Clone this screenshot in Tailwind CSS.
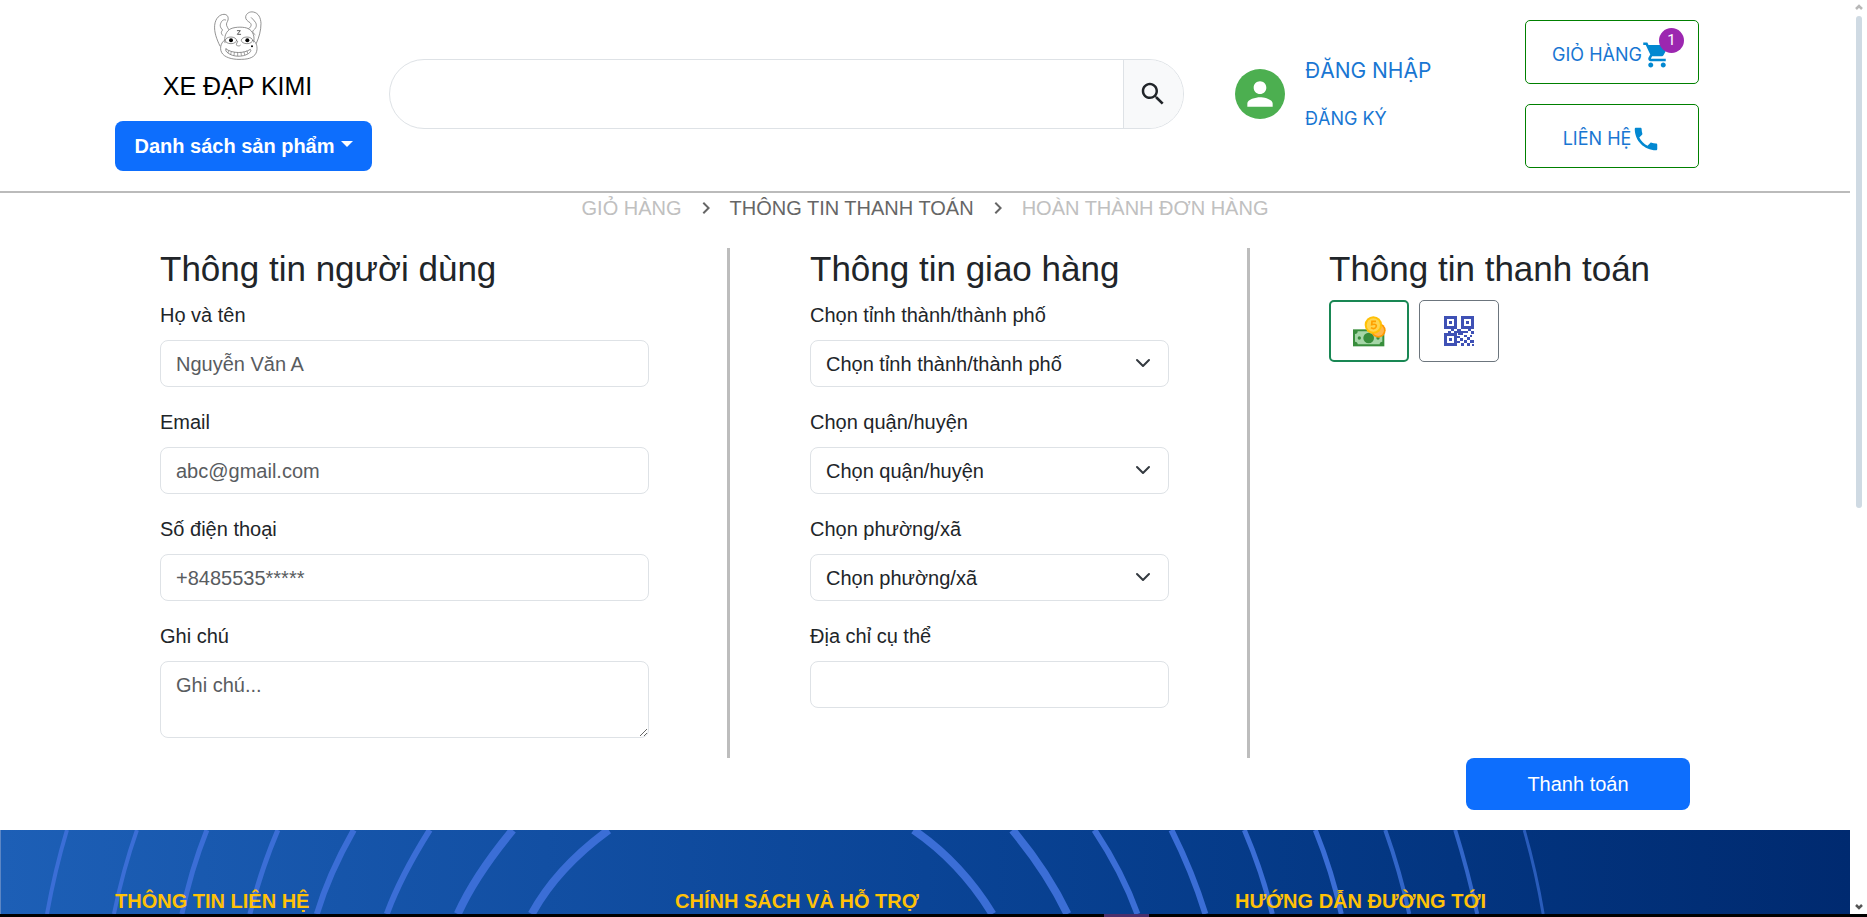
<!DOCTYPE html>
<html lang="vi">
<head>
<meta charset="utf-8">
<meta name="viewport" content="width=device-width, initial-scale=1">
<title>Xe Đạp Kimi - Thông tin thanh toán</title>
<script src="https://cdn.jsdelivr.net/npm/@tailwindcss/browser@4"></script>
</head>
<body class="flex h-screen overflow-hidden bg-white font-['Liberation_Sans',Arial,sans-serif] text-[20px] leading-[30px] text-[#212529]">
<div class="flex min-w-0 flex-1 flex-col">

  <header class="flex items-center border-b-2 border-[#bbbbbb] pr-[151px] pb-1 pl-[115px]">
    <div class="w-[257px] shrink-0 pt-[10px] pb-4">
      <a href="#" class="flex flex-col items-center pr-3 text-[25px] leading-[36px] text-black">
        <svg class="mb-2 size-[50px]" viewBox="39 30 150 150" fill="none" stroke="#777" stroke-width="2.4" stroke-linecap="round" aria-hidden="true">
          <path d="M60 138C50 118 42 96 44 76 46 54 60 43 72 43c10 0 14 8 12 17-2 8-6 8-4 17 1 5 5 7 6 11"/>
          <path d="M68 106c-6-7-5-10 0-16-8-8-9-14-5-22 3-7 9-11 14-8"/>
          <path d="M75 128c-4-18 4-36 18-42 14-6 40-6 52 0 14 7 20 24 16 40"/>
          <path d="M146 86c8-6 10-12 4-18-8-5-14-10-13-18 2-10 12-16 23-14 16 3 22 18 23 34 0 22-6 42-14 60"/>
          <path d="M165 104c-8-6-8-10-4-14 8-6 10-14 6-22-4-6-8-10-13-15"/>
          <path d="M74 120c-14 10-16 30-6 42 12 14 38 17 56 16 26 0 42-8 46-24 3-12 0-26-9-32"/>
          <path d="M78 147c20 14 54 14 73 1 4 3 0 9-6 13-18 11-46 10-61-2-6-4-9-9-6-12z"/>
          <path d="M86 152l-2 6M94 155l-2 8M103 157l-1 9M113 158v9M123 157l1 9M132 156l2 8M141 153l2 7" stroke-width="2"/>
          <ellipse cx="93" cy="121" rx="17" ry="10"/><ellipse cx="141" cy="121" rx="17" ry="10"/>
          <path d="M113 124c-4 8-6 12-1 13 4 1 6 2 9-1"/>
          <circle cx="93" cy="121" r="6" fill="#000" stroke="none"/><circle cx="142" cy="121" r="6" fill="#000" stroke="none"/>
          <circle cx="156" cy="139" r="3" fill="#000" stroke="none"/>
          <path d="M112 92h9l-9 11h10" stroke="#333"/>
        </svg>
        XE ĐẠP KIMI
      </a>
      <button type="button" class="mt-[17px] flex h-[50px] w-full items-center justify-center gap-[6px] rounded-lg bg-[#0d6efd] font-bold text-white">
        Danh sách sản phẩm
        <svg class="mb-1 h-[6px] w-3" viewBox="0 0 12 6" fill="currentColor" aria-hidden="true"><path d="M0 0h12L6 6z"/></svg>
      </button>
    </div>

    <form class="ml-[17px] flex h-[70px] min-w-0 flex-1 overflow-hidden rounded-full border border-[#dee2e6]">
      <input type="search" aria-label="Tìm kiếm" class="min-w-0 flex-1 px-8 outline-none">
      <button type="button" aria-label="Tìm" class="flex w-[60px] items-center border-l border-[#dee2e6] bg-[#f8f9fa] pl-[14px]">
        <svg class="size-[30px]" viewBox="0 0 24 24" fill="#212529" aria-hidden="true"><path d="M15.5 14h-.79l-.28-.27C15.41 12.59 16 11.11 16 9.5 16 5.91 13.09 3 9.5 3S3 5.91 3 9.5 5.91 16 9.5 16c1.61 0 3.09-.59 4.23-1.57l.27.28v.79l5 4.99L20.49 19l-4.99-5zm-6 0C7.01 14 5 11.99 5 9.5S7.01 5 9.5 5 14 7.01 14 9.5 11.99 14 9.5 14z"/></svg>
      </button>
    </form>

    <span class="ml-[51px] flex size-[50px] shrink-0 items-center justify-center rounded-full bg-[#4caf50]">
      <svg class="size-[38px]" viewBox="0 0 24 24" fill="#fff" aria-hidden="true"><path d="M12 12c2.21 0 4-1.79 4-4s-1.79-4-4-4-4 1.79-4 4 1.79 4 4 4zm0 2c-2.67 0-8 1.34-8 4v2h16v-2c0-2.66-5.33-4-8-4z"/></svg>
    </span>
    <nav class="ml-5 flex w-[220px] shrink-0 flex-col gap-5 font-[Inter,sans-serif] text-[#1976d2]">
      <a href="#" class="text-[21px] leading-[30px]">ĐĂNG NHẬP</a>
      <a href="#" class="text-[18px] leading-[26px]">ĐĂNG KÝ</a>
    </nav>
    <div class="flex w-[174px] shrink-0 flex-col gap-5 font-[Inter,sans-serif] text-[18px] leading-[26px] text-[#1976d2]">
      <button type="button" class="flex h-16 items-center justify-center rounded-[5px] border border-[#008000] pt-[6px]">
        GIỎ HÀNG
        <span class="relative">
          <svg class="size-[30px]" viewBox="0 0 24 24" fill="#0288d1" aria-hidden="true"><path d="M7 18c-1.1 0-1.99.9-1.99 2S5.9 22 7 22s2-.9 2-2-.9-2-2-2zM1 2v2h2l3.6 7.59-1.35 2.45c-.16.28-.25.61-.25.96 0 1.1.9 2 2 2h12v-2H7.42c-.14 0-.25-.11-.25-.25l.03-.12.9-1.63h7.45c.75 0 1.41-.41 1.75-1.03l3.58-6.49c.08-.14.12-.31.12-.48 0-.55-.45-1-1-1H5.21l-.94-2H1zm16 16c-1.1 0-1.99.9-1.99 2s.89 2 1.99 2 2-.9 2-2-.9-2-2-2z"/></svg>
          <span class="absolute -top-3 -right-3 flex size-[25px] items-center justify-center rounded-full bg-[#9c27b0] font-[Roboto,sans-serif] text-[15px] text-white">1</span>
        </span>
      </button>
      <button type="button" class="flex h-16 items-center justify-center rounded-[5px] border border-[#008000] pt-[6px]">
        LIÊN HỆ
        <svg class="size-[30px]" viewBox="0 0 24 24" fill="#0288d1" aria-hidden="true"><path d="M6.62 10.79c1.44 2.83 3.76 5.14 6.59 6.59l2.2-2.2c.27-.27.67-.36 1.02-.24 1.12.37 2.33.57 3.57.57.55 0 1 .45 1 1V20c0 .55-.45 1-1 1-9.39 0-17-7.61-17-17 0-.55.45-1 1-1h3.5c.55 0 1 .45 1 1 0 1.25.2 2.45.57 3.57.11.35.03.74-.25 1.02l-2.2 2.2z"/></svg>
      </button>
    </div>
  </header>

  <nav aria-label="Tiến trình" class="flex items-center justify-center gap-3">
    <a href="#" class="text-[#c0c0c0]">GIỎ HÀNG</a>
    <svg class="size-6" viewBox="0 0 24 24" fill="#666" aria-hidden="true"><path d="M10 6 8.59 7.41 13.17 12l-4.58 4.59L10 18l6-6z"/></svg>
    <a href="#" aria-current="step" class="text-[#666666]">THÔNG TIN THANH TOÁN</a>
    <svg class="size-6" viewBox="0 0 24 24" fill="#666" aria-hidden="true"><path d="M10 6 8.59 7.41 13.17 12l-4.58 4.59L10 18l6-6z"/></svg>
    <a href="#" class="text-[#c0c0c0]">HOÀN THÀNH ĐƠN HÀNG</a>
  </nav>

  <main class="mt-[25px] px-20 pb-5">
    <form>
      <div class="grid grid-cols-[5fr_4fr_4fr]">
        <section class="border-r-3 border-[#bdbdbd] pr-[78px] pb-5 pl-20">
          <h2 class="mb-[10px] text-[35px] leading-[42px]">Thông tin người dùng</h2>
          <div class="flex flex-col gap-5">
            <div class="flex flex-col gap-[10px]">
              <label for="name">Họ và tên</label>
              <input id="name" type="text" placeholder="Nguyễn Văn A" class="h-[47px] rounded-lg border border-[#dee2e6] px-[15px] pt-[2px] placeholder:text-[#595c5f]">
            </div>
            <div class="flex flex-col gap-[10px]">
              <label for="email">Email</label>
              <input id="email" type="email" placeholder="abc@gmail.com" class="h-[47px] rounded-lg border border-[#dee2e6] px-[15px] pt-[2px] placeholder:text-[#595c5f]">
            </div>
            <div class="flex flex-col gap-[10px]">
              <label for="phone">Số điện thoại</label>
              <input id="phone" type="tel" placeholder="+8485535*****" class="h-[47px] rounded-lg border border-[#dee2e6] px-[15px] pt-[2px] placeholder:text-[#595c5f]">
            </div>
            <div class="flex flex-col gap-[10px]">
              <label for="note">Ghi chú</label>
              <textarea id="note" placeholder="Ghi chú..." class="h-[77px] resize-y rounded-lg border border-[#dee2e6] px-[15px] py-2 placeholder:text-[#595c5f]"></textarea>
            </div>
          </div>
        </section>

        <section class="border-r-3 border-[#bdbdbd] pr-[78px] pb-5 pl-20">
          <h2 class="mb-[10px] text-[35px] leading-[42px]">Thông tin giao hàng</h2>
          <div class="flex flex-col gap-5">
            <div class="flex flex-col gap-[10px]">
              <label for="city">Chọn tỉnh thành/thành phố</label>
              <div class="relative">
                <select id="city" class="block h-[47px] w-full appearance-none rounded-lg border border-[#dee2e6] px-[15px]"><option>Chọn tỉnh thành/thành phố</option></select>
                <svg class="pointer-events-none absolute top-[15px] right-[18px] size-4" viewBox="0 0 16 16" fill="none" stroke="#343a40" stroke-width="2" stroke-linecap="round" stroke-linejoin="round" aria-hidden="true"><path d="m2 5 6 6 6-6"/></svg>
              </div>
            </div>
            <div class="flex flex-col gap-[10px]">
              <label for="district">Chọn quận/huyện</label>
              <div class="relative">
                <select id="district" class="block h-[47px] w-full appearance-none rounded-lg border border-[#dee2e6] px-[15px]"><option>Chọn quận/huyện</option></select>
                <svg class="pointer-events-none absolute top-[15px] right-[18px] size-4" viewBox="0 0 16 16" fill="none" stroke="#343a40" stroke-width="2" stroke-linecap="round" stroke-linejoin="round" aria-hidden="true"><path d="m2 5 6 6 6-6"/></svg>
              </div>
            </div>
            <div class="flex flex-col gap-[10px]">
              <label for="ward">Chọn phường/xã</label>
              <div class="relative">
                <select id="ward" class="block h-[47px] w-full appearance-none rounded-lg border border-[#dee2e6] px-[15px]"><option>Chọn phường/xã</option></select>
                <svg class="pointer-events-none absolute top-[15px] right-[18px] size-4" viewBox="0 0 16 16" fill="none" stroke="#343a40" stroke-width="2" stroke-linecap="round" stroke-linejoin="round" aria-hidden="true"><path d="m2 5 6 6 6-6"/></svg>
              </div>
            </div>
            <div class="flex flex-col gap-[10px]">
              <label for="address">Địa chỉ cụ thể</label>
              <input id="address" type="text" class="h-[47px] rounded-lg border border-[#dee2e6] px-[15px]">
            </div>
          </div>
        </section>

        <section class="pl-[79px]">
          <h2 class="mb-[10px] text-[35px] leading-[42px] whitespace-nowrap">Thông tin thanh toán</h2>
          <div class="flex gap-[10px]">
            <button type="button" aria-label="Tiền mặt" class="flex h-[62px] w-20 items-center justify-center rounded-[5px] border-2 border-[#198754]">
              <svg class="h-[31px] w-[33px]" viewBox="0 0 99 93" aria-hidden="true">
                <path fill="#388e3c" d="M0 40h94v51H0z"/>
                <path fill="#a5d6a7" d="M14 46h66a8 8 0 0 0 8 8v23a8 8 0 0 0-8 8H14a8 8 0 0 0-8-8V54a8 8 0 0 0 8-8z"/>
                <circle cx="47" cy="66" r="16" fill="#388e3c"/><circle cx="19" cy="66" r="5" fill="#388e3c"/><circle cx="75" cy="66" r="5" fill="#388e3c"/>
                <circle cx="76" cy="43" r="22" fill="#ff9800"/><circle cx="76" cy="43" r="17" fill="#ffb74d"/>
                <circle cx="61" cy="27" r="26" fill="#ffc107"/><circle cx="61" cy="27" r="20" fill="#ffd54f"/>
                <path fill="none" stroke="#ff9f00" stroke-width="5" d="M69 16H57l-1 10c12-4 16 2 13 7-3 6-10 6-15 2"/>
              </svg>
            </button>
            <button type="button" aria-label="Mã QR" class="flex h-[62px] w-20 items-center justify-center rounded-[5px] border border-[#6c757d]">
              <svg class="size-[30px]" viewBox="0 0 30 30" fill="#3f51b5" aria-hidden="true">
                <path fill-rule="evenodd" d="M0 0h13v13H0zM3 3v7h7V3zM17 0h13v13H17zM20 3v7h7V3zM0 17h13v13H0zM3 20v7h7v-7z"/>
                <path d="M5 5h3v3H5zM22 5h3v3h-3zM5 22h3v3H5zM13 13h4v4h-4zM7 13h3v2H7zM4 15h3v2H4zM10 15h3v2h-3zM17 15h7v2h-7zM24 13h3v2h-3zM27 15h3v3h-3zM14 17h5v2h-5zM13 20h3v2h-3zM16 22h3v3h-3zM13 25h3v2h-3zM20 19h3v2h-3zM23 21h3v3h-3zM26 19h2v2h-2zM20 24h3v3h-3zM26 24h4v3h-4zM23 27h3v3h-3zM17 27h3v3h-3zM28 28h2v2h-2z"/>
              </svg>
            </button>
          </div>
        </section>
      </div>
      <div class="flex justify-end pr-20">
        <button type="button" class="h-[52px] w-56 rounded-lg bg-[#0d6efd] text-white">Thanh toán</button>
      </div>
    </form>
  </main>

  <footer class="relative flex-1 overflow-hidden border-l border-[#5c86c4] bg-linear-to-r from-[#1d5fb6] via-[#0a4496] to-[#002a70]">
    <svg class="absolute inset-0 size-full" viewBox="0 0 1850 84" preserveAspectRatio="none" fill="none" stroke="#3b6ed6" aria-hidden="true">
      <g stroke-width="4"><path d="M66 0Q54 40 46 84"/><path d="M136 0Q122 40 113 84"/></g>
      <path stroke-width="5" d="M206 0Q190 40 181 84M277 0Q260 40 249 84"/>
      <path stroke-width="6" d="M353 0Q328 44 316 84M429 0Q400 46 386 84"/>
      <path stroke-width="8" d="M512 0Q474 46 457 84M608 0Q556 38 531 84"/>
      <path stroke-width="8" d="M913 0Q960 32 992 84M1012 0Q1047 42 1067 84"/>
      <path stroke-width="6" d="M1094 0Q1122 42 1137 84M1171 0Q1192 42 1205 84"/>
      <path stroke-width="5" d="M1244 0Q1262 42 1272 84M1315 0Q1332 42 1341 84"/>
      <path stroke-width="4" opacity=".85" d="M1385 0Q1400 42 1409 84M1455 0Q1468 42 1477 84"/>
      <path stroke-width="3" opacity=".7" d="M1524 0Q1536 42 1543 84"/>
    </svg>
    <div class="relative grid grid-cols-3 pt-14 pr-[55px] pl-[114px] font-bold text-[#ffc107]">
      <h3>THÔNG TIN LIÊN HỆ</h3>
      <h3>CHÍNH SÁCH VÀ HỖ TRỢ</h3>
      <h3>HƯỚNG DẪN ĐƯỜNG TỚI</h3>
    </div>
  </footer>
  <div class="flex h-[3px] shrink-0 bg-black"><span class="ml-[1104px] w-[45px] bg-[#4b2f6b]"></span></div>
</div>

<div class="flex w-[17px] shrink-0 flex-col" aria-hidden="true">
  <div class="flex flex-1 flex-col items-center gap-[6px] pt-1">
    <svg class="h-[6px] w-2" viewBox="0 0 8 6" fill="none" stroke="#b8b8b8" stroke-width="2.5"><path d="M1 5l3-3 3 3"/></svg>
    <span class="h-[492px] w-[6px] rounded-full bg-[#cfdae3]"></span>
    <svg class="mt-auto mb-1 h-[6px] w-2" viewBox="0 0 8 6" fill="none" stroke="#555" stroke-width="2.5"><path d="M1 1l3 3 3-3"/></svg>
  </div>
  <div class="h-[3px] bg-black"></div>
</div>
</body>
</html>
